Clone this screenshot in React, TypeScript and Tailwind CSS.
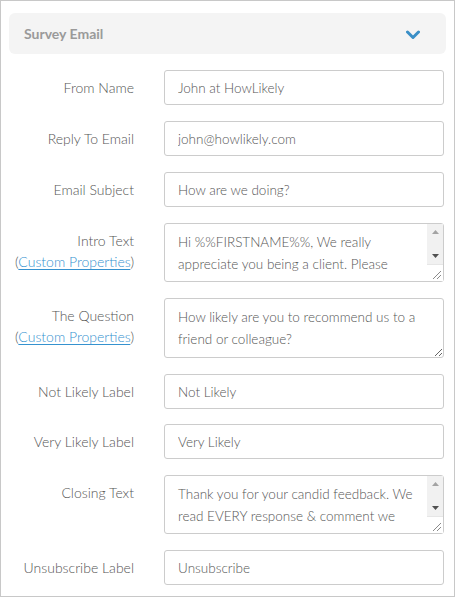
import React from 'react';

const FONT = { fontFamily: 'Lato, "Open Sans", sans-serif' };

function CustomProps() {
  return (
    <span className="block">
      (<a href="#" className="text-[#3592cf] underline underline-offset-2">Custom Properties</a>)
    </span>
  );
}

function InputRow({ label, value, className = '' }: { label: string; value: string; className?: string }) {
  return (
    <div className={`flex items-start ${className}`}>
      <label className="w-[133px] shrink-0 pt-[7px] text-right text-[14px] font-light leading-[21px] text-[#555]">{label}</label>
      <input
        readOnly
        value={value}
        className="ml-[30px] h-[35px] w-[280px] rounded-[3px] border border-[#cccccc] bg-white px-[13px] text-[13.5px] font-light text-[#555] outline-none"
        style={FONT}
      />
    </div>
  );
}

// fake classic scrollbar drawn over the textarea's right edge
function FakeScrollbar() {
  return (
    <div className="pointer-events-none absolute bottom-[1px] right-[1px] top-[1px] flex w-[16px] flex-col">
      <div className="flex flex-1 flex-col items-center justify-between bg-[#f1f1f1] py-[6px]">
        <svg width="7" height="4" viewBox="0 0 7 4">
          <polygon points="0,4 3.5,0 7,4" fill="#a3a3a3" />
        </svg>
        <svg width="7" height="4" viewBox="0 0 7 4">
          <polygon points="0,0 3.5,4 7,0" fill="#505050" />
        </svg>
      </div>
      <div className="flex h-[17px] items-end justify-end border-t border-[#e6e6e6] bg-white pb-[2px] pr-[2px]">
        <svg width="9" height="9" viewBox="0 0 9 9">
          <line x1="1" y1="9" x2="9" y2="1" stroke="#8a8a8a" strokeWidth="1" />
          <line x1="5" y1="9" x2="9" y2="5" stroke="#8a8a8a" strokeWidth="1" />
        </svg>
      </div>
    </div>
  );
}

function TextRow({ label, value, custom, scroll, h }: { label: string; value: string; custom?: boolean; scroll?: boolean; h: string }) {
  return (
    <div className="flex items-start">
      <div className="w-[133px] shrink-0 pt-[7px] text-right text-[14px] font-light leading-[21px] text-[#555]">
        <span className="block">{label}</span>
        {custom && <CustomProps />}
      </div>
      <div className={`relative ml-[30px] w-[280px] ${h}`}>
        <textarea
          readOnly
          value={value}
          className={`block h-full w-full overflow-hidden rounded-[3px] border border-[#cccccc] bg-white py-[7px] pl-[13px] text-[13.5px] font-light leading-[22px] text-[#555] outline-none ${scroll ? 'resize-none pr-[30px]' : 'resize-y pr-[8px]'}`}
          style={FONT}
        />
        {scroll && <FakeScrollbar />}
      </div>
    </div>
  );
}

export default function App() {
  return (
    <div className="h-[597px] w-[455px] overflow-hidden border border-[#c8c8c8] bg-white" style={FONT}>
      <div className="mx-2 mt-3 flex h-[41px] items-center justify-between rounded-md bg-[#f4f4f4] pl-[15px] pr-[26px]">
        <span className="text-[14px] font-bold text-[#9a9a9a]">Survey Email</span>
        <svg width="14" height="10" viewBox="0 0 14 10" className="mt-[2px]">
          <polyline points="1.5,2 7,7.5 12.5,2" fill="none" stroke="#3a8fc7" strokeWidth="3" strokeLinecap="round" strokeLinejoin="round" />
        </svg>
      </div>
      <div className="mt-4 flex flex-col gap-4">
        <InputRow label="From Name" value="John at HowLikely" />
        <InputRow label="Reply To Email" value="john@howlikely.com" />
        <InputRow label="Email Subject" value="How are we doing?" />
        <TextRow
          label="Intro Text"
          custom
          scroll
          h="h-[59px]"
          value="Hi %%FIRSTNAME%%, We really appreciate you being a client. Please take 30 seconds to answer this quick question so we can serve you better."
        />
        <TextRow label="The Question" custom h="h-[60px]" value="How likely are you to recommend us to a friend or colleague?" />
        <InputRow label="Not Likely Label" value="Not Likely" />
        <InputRow label="Very Likely Label" value="Very Likely" className="-mt-px" />
        <TextRow
          label="Closing Text"
          scroll
          h="h-[59px]"
          value="Thank you for your candid feedback. We read EVERY response & comment we receive from our valued clients to help us improve."
        />
        <InputRow label="Unsubscribe Label" value="Unsubscribe" />
      </div>
    </div>
  );
}
